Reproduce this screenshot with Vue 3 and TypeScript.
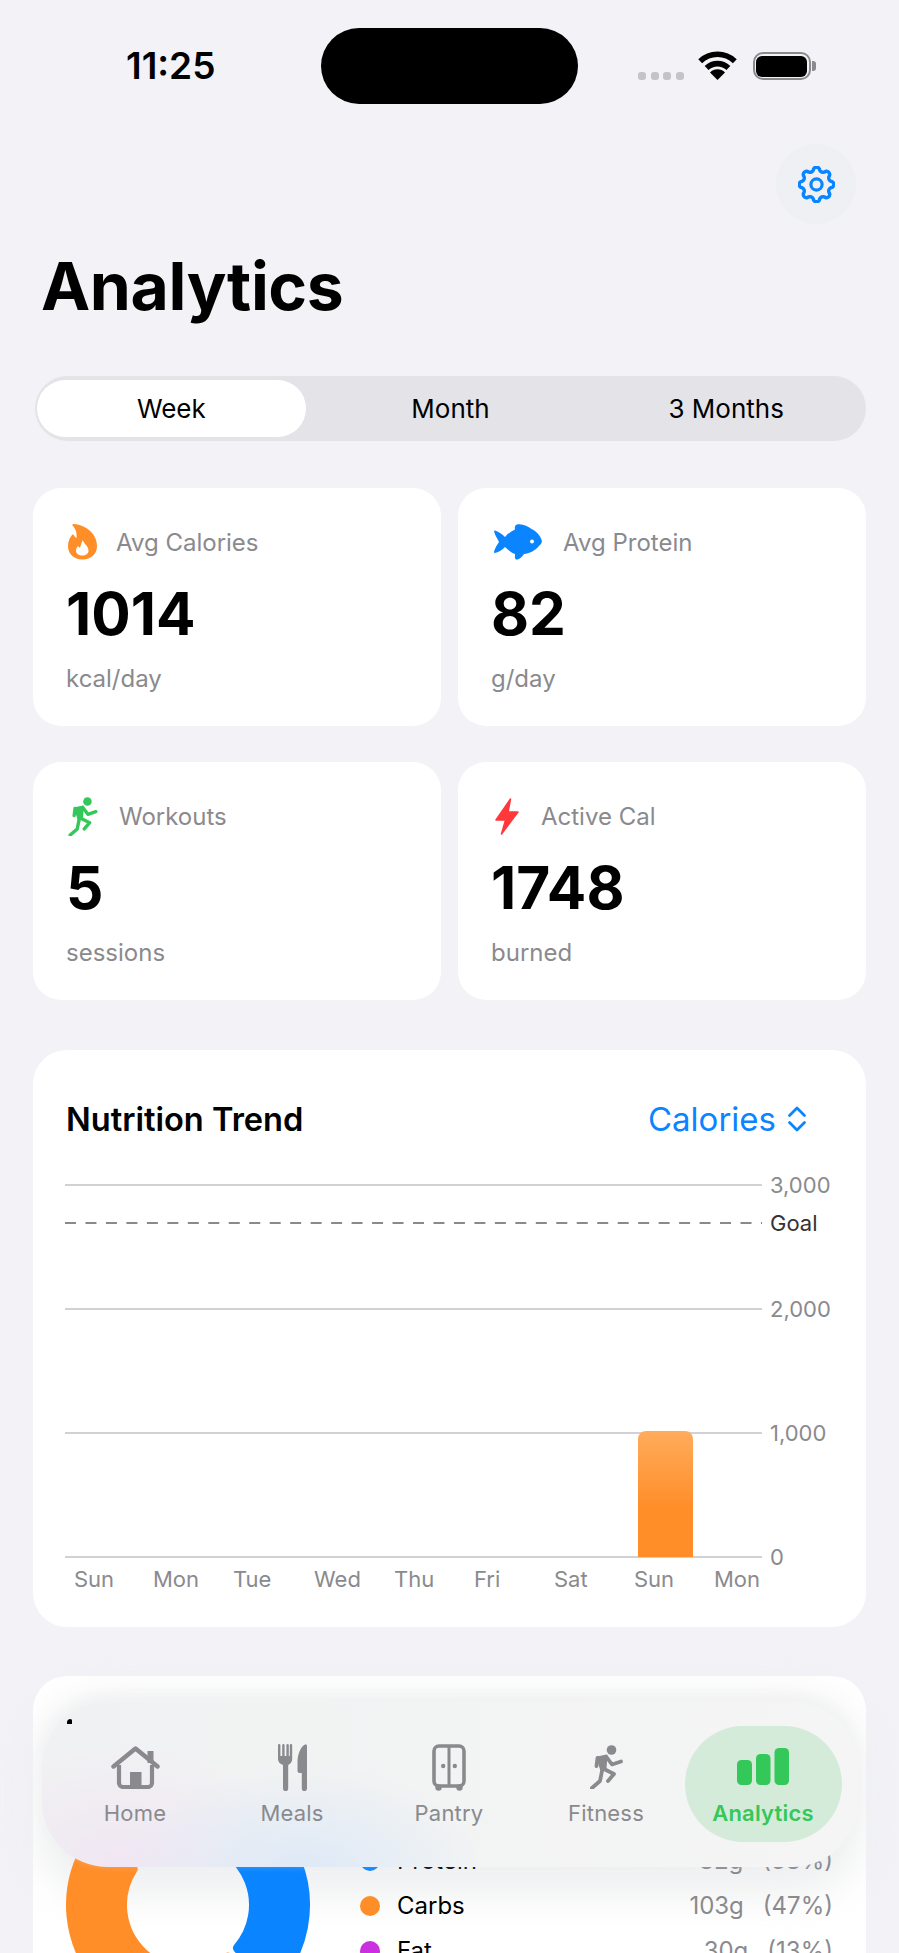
<script setup lang="ts">
const runnerTorso = 'M7.5 12.5 L16.5 10.5 L15.5 23.5 L11.5 26 Z'
const gearPath = (() => {
  const pts: string[] = []
  const n = 240
  for (let i = 0; i < n; i++) {
    const t = (i / n) * Math.PI * 2
    const c = Math.cos(8 * t)
    const s = Math.sign(c) * Math.pow(Math.abs(c), 0.6)
    const r = 15.4 + 1.9 * s
    pts.push(`${(18.5 + r * Math.sin(t)).toFixed(2)} ${(18.5 - r * Math.cos(t)).toFixed(2)}`)
  }
  return 'M' + pts.join(' L') + ' Z'
})()

const stats = [
  { id: 'flame', label: 'Avg Calories', value: '1014', unit: 'kcal/day' },
  { id: 'fish', label: 'Avg Protein', value: '82', unit: 'g/day' },
  { id: 'run', label: 'Workouts', value: '5', unit: 'sessions' },
  { id: 'bolt', label: 'Active Cal', value: '1748', unit: 'burned' },
]

const gridLines = [
  { y: 15, label: '3,000' },
  { y: 139, label: '2,000' },
  { y: 263, label: '1,000' },
  { y: 387, label: '0' },
]
const days = [
  ['Sun', 9], ['Mon', 88], ['Tue', 168], ['Wed', 249], ['Thu', 329],
  ['Fri', 409], ['Sat', 489], ['Sun', 569], ['Mon', 649],
] as [string, number][]

function sector(startDeg: number, endDeg: number): string {
  const cx = 122, cy = 122, R = 117, r = 66
  const a = (startDeg * Math.PI) / 180, b = (endDeg * Math.PI) / 180
  const dO = 6.5 / 122, dI = 6.5 / 61
  const p = (rad: number, ang: number) =>
    `${(cx + rad * Math.sin(ang)).toFixed(2)} ${(cy - rad * Math.cos(ang)).toFixed(2)}`
  const large = endDeg - startDeg > 180 ? 1 : 0
  return `M${p(R, a + dO)} A${R} ${R} 0 ${large} 1 ${p(R, b - dO)} L${p(r, b - dI)} A${r} ${r} 0 ${large} 0 ${p(r, a + dI)} Z`
}

const slices = [
  { color: '#0a84ff', d: sector(0, 136.8) },
  { color: '#ff8d28', d: sector(136.8, 309) },
  { color: '#cb30e0', d: sector(309, 360) },
]
const legend = [
  { name: 'Protein', color: '#0a84ff', g: '82g', pct: '(38%)' },
  { name: 'Carbs', color: '#ff8d28', g: '103g', pct: '(47%)' },
  { name: 'Fat', color: '#cb30e0', g: '30g', pct: '(13%)' },
]
const tabs = ['Home', 'Meals', 'Pantry', 'Fitness', 'Analytics']
</script>

<template>
  <div class="screen">
    <header class="status">
      <div class="time">11:25</div>
      <div class="island"></div>
      <div class="status-right">
        <div class="signal"><i></i><i></i><i></i><i></i></div>
        <svg class="wifi" viewBox="0 0 39 29" width="39" height="29">
          <path d="M2.2 10.2 A25 25 0 0 1 36.8 10.2" fill="none" stroke="#000" stroke-width="5.6" />
          <path d="M8.6 17 A15.8 15.8 0 0 1 30.4 17" fill="none" stroke="#000" stroke-width="5.6" />
          <path d="M19.5 29 L12 21.4 A10.5 10.5 0 0 1 27 21.4 Z" fill="#000" />
        </svg>
        <div class="battery"><div class="battery-fill"></div></div>
        <div class="battery-nub"></div>
      </div>
    </header>

    <div class="toolbar">
      <button class="gear-btn" aria-label="Settings">
        <svg viewBox="0 0 37 37" width="37" height="37">
          <path :d="gearPath" fill="none" stroke="#0a84ff" stroke-width="3.4" stroke-linejoin="round" />
          <circle cx="18.5" cy="18.5" r="5.6" fill="none" stroke="#0a84ff" stroke-width="3.2" />
        </svg>
      </button>
    </div>

    <h1 class="title">Analytics</h1>

    <div class="segmented">
      <div class="seg seg-on">Week</div>
      <div class="seg">Month</div>
      <div class="seg">3 Months</div>
    </div>

    <section class="stats">
      <article v-for="s in stats" :key="s.id" class="card stat">
        <div class="stat-head" :class="'head-' + s.id">
          <svg v-if="s.id === 'flame'" viewBox="0 0 29 36" width="29" height="36">
            <path fill="#ff8d28" d="M4.5 1.5 C4 0.6 5 0 6 0.1 C15 0.6 29 8 29 22 C29 30 23 35.5 14.5 35.5 C6 35.5 0 30 0 22 C0 17 2 13.5 4 11 C4.6 10.2 5.6 10.4 6 11.3 C6.6 12.6 7.4 13.6 8.5 14 C9 9 8 5 4.5 1.5Z" />
            <path fill="#fff" d="M14.8 16 C15.5 19.5 20.5 22 20.5 26.5 C20.5 29.8 17.8 31.5 14.3 31.5 C10.8 31.5 8 29.8 8 26.5 C8 24.5 9 23 10 22 C10.6 23 11.2 23.6 12 23.8 C12.8 21.5 13.5 18.5 14.8 16Z" />
          </svg>
          <svg v-else-if="s.id === 'fish'" viewBox="0 0 48 36" width="48" height="36">
            <path fill="#0a84ff" d="M1 6.5 C4 7.5 8 10 11 13 C14 9.5 17.5 7 21 5.5 C20.5 3 21 1 23 0.5 C28 -0.5 34 2 37.5 5 C43 7.5 47 12.5 47.8 17 C48 18.5 47 20 45 22 C41 27 35 29.5 30 30 C28 33 25 36 22 35.5 C20.5 35 21 33 21 30 C17 28.5 14 26 11 23 C8 26 4 28.5 1 29 C0 29 0 28 0.2 27 C1 24 3.5 20.5 5 18 C3.5 15 1 11 0.2 8 C0 7 0.3 6.3 1 6.5Z" />
            <circle cx="38" cy="17.5" r="2" fill="#fff" />
          </svg>
          <svg v-else-if="s.id === 'run'" viewBox="0 0 33 44" width="30" height="39">
            <circle cx="21.5" cy="5" r="4.8" fill="#34c759" />
            <path :d="runnerTorso" fill="#34c759" stroke="#34c759" stroke-width="2" stroke-linejoin="round" />
            <path d="M7.5 13 L6.5 21 M16.5 12 L22 19.5 L31 16.5 M14 24 L24 29 L18 36 M12 26 L10 36 L2 43" fill="none" stroke="#34c759" stroke-width="3.8" stroke-linecap="round" stroke-linejoin="round" />
          </svg>
          <svg v-else viewBox="0 0 24 37" width="24" height="37">
            <path fill="#ff383c" stroke="#ff383c" stroke-width="1.5" stroke-linejoin="round" d="M15.5 1 L1 22 H10.5 L6.5 36 L23 14 H13 Z" />
          </svg>
          <span class="stat-label">{{ s.label }}</span>
        </div>
        <div class="stat-value">{{ s.value }}</div>
        <div class="stat-unit">{{ s.unit }}</div>
      </article>
    </section>

    <section class="card chart-card">
      <div class="chart-head">
        <h2 class="chart-title">Nutrition Trend</h2>
        <div class="picker">
          <span>Calories</span>
          <svg viewBox="0 0 20 26" width="20" height="26">
            <path d="M2.5 9.5 L10 2 L17.5 9.5 M2.5 16.5 L10 24 L17.5 16.5" fill="none" stroke="#0a84ff" stroke-width="2.8" stroke-linecap="round" stroke-linejoin="round" />
          </svg>
        </div>
      </div>
      <svg class="chart" viewBox="0 0 790 430" width="790" height="430">
        <defs>
          <linearGradient id="barGrad" x1="0" y1="0" x2="0" y2="1">
            <stop offset="0" stop-color="#ffac5c" />
            <stop offset="0.62" stop-color="#ff8d28" />
          </linearGradient>
        </defs>
        <g v-for="g in gridLines" :key="g.label">
          <line x1="0" x2="697" :y1="g.y" :y2="g.y" stroke="#d1d1d6" stroke-width="2" />
          <text x="705" :y="g.y + 8" class="tick">{{ g.label }}</text>
        </g>
        <line x1="0" x2="697" y1="53" y2="53" stroke="#8a8a8e" stroke-width="2" stroke-dasharray="11 9.47" />
        <text x="705" y="61" class="goal">Goal</text>
        <path d="M573 387 V269 a8 8 0 0 1 8 -8 H620 a8 8 0 0 1 8 8 V387 Z" fill="url(#barGrad)" />
        <text v-for="(d, i) in days" :key="i" :x="d[1]" y="417" class="tick">{{ d[0] }}</text>
      </svg>
    </section>

    <section class="card macro-card">
      <div class="halo"></div>
      <div class="macro-row">
        <svg class="donut" viewBox="0 0 244 244" width="244" height="244">
          <path v-for="s in slices" :key="s.color" :d="s.d" :fill="s.color" :stroke="s.color" stroke-width="10" stroke-linejoin="round" />
        </svg>
        <ul class="legend">
          <li v-for="l in legend" :key="l.name" class="legend-row">
            <span class="dot" :style="{ background: l.color }"></span>
            <span class="legend-name">{{ l.name }}</span>
            <span class="legend-g">{{ l.g }}</span>
            <span class="legend-pct">{{ l.pct }}</span>
          </li>
        </ul>
      </div>
    </section>

    <nav class="tabbar">
      <i class="peek"></i>
      <div v-for="t in tabs" :key="t" class="tab" :class="{ 'tab-on': t === 'Analytics' }">
        <div class="tab-icon">
          <svg v-if="t === 'Home'" viewBox="0 0 49 43" width="49" height="43">
            <rect x="36.5" y="5" width="6" height="12" fill="#8a8a8e" />
            <path d="M2.5 20.5 L24.5 2.5 L46.5 20.5" fill="none" stroke="#8a8a8e" stroke-width="4.4" stroke-linecap="round" stroke-linejoin="round" />
            <path d="M8 19 V37 a4 4 0 0 0 4 4 H37 a4 4 0 0 0 4 -4 V19" fill="none" stroke="#8a8a8e" stroke-width="4.2" />
            <rect x="19" y="26" width="11.5" height="14" fill="#8a8a8e" />
          </svg>
          <svg v-else-if="t === 'Meals'" viewBox="0 0 29 47" width="29" height="47">
            <path fill="#8a8a8e" d="M0 1.2 a1.2 1.2 0 0 1 2.4 0 V12 H4.2 V1.2 a1.2 1.2 0 0 1 2.4 0 V12 H8.4 V1.2 a1.2 1.2 0 0 1 2.4 0 V12 H11.8 V1.2 a1.2 1.2 0 0 1 2.4 0 V15 C14.2 18 12.4 20 10.2 21 V44.5 a2.6 2.6 0 0 1 -5.2 0 V21 C2 20 0 18 0 15 Z" />
            <path fill="#8a8a8e" d="M27.5 0.3 a1.5 1.5 0 0 1 1.5 1.5 V44.5 a2.6 2.6 0 0 1 -5.2 0 V29 H21.5 a2 2 0 0 1 -2 -2 V18 C19.5 10 23 2 27.5 0.3 Z" />
          </svg>
          <svg v-else-if="t === 'Pantry'" viewBox="0 0 34 47" width="34" height="47">
            <rect x="2" y="2" width="30" height="40" rx="5" fill="none" stroke="#8a8a8e" stroke-width="3.6" />
            <path d="M17 2 V42" stroke="#8a8a8e" stroke-width="3" />
            <circle cx="11.2" cy="22" r="2.2" fill="#8a8a8e" />
            <circle cx="22.8" cy="22" r="2.2" fill="#8a8a8e" />
            <circle cx="6.5" cy="43.5" r="3.2" fill="#8a8a8e" />
            <circle cx="27.5" cy="43.5" r="3.2" fill="#8a8a8e" />
          </svg>
          <svg v-else-if="t === 'Fitness'" viewBox="0 0 33 44" width="33" height="44">
            <circle cx="21.5" cy="5" r="4.8" fill="#8a8a8e" />
            <path :d="runnerTorso" fill="#8a8a8e" stroke="#8a8a8e" stroke-width="2" stroke-linejoin="round" />
            <path d="M7.5 13 L6.5 21 M16.5 12 L22 19.5 L31 16.5 M14 24 L24 29 L18 36 M12 26 L10 36 L2 43" fill="none" stroke="#8a8a8e" stroke-width="3.8" stroke-linecap="round" stroke-linejoin="round" />
          </svg>
          <svg v-else viewBox="0 0 52 38" width="52" height="38">
            <rect x="0" y="12" width="15" height="25" rx="4.5" fill="#34c759" />
            <rect x="19" y="6" width="14.5" height="31" rx="4.5" fill="#34c759" />
            <rect x="37.5" y="0" width="14.5" height="37" rx="4.5" fill="#34c759" />
          </svg>
        </div>
        <span class="tab-label">{{ t }}</span>
      </div>
    </nav>
  </div>
</template>

<style scoped>
.screen {
  position: relative;
  width: 899px;
  height: 1953px;
  overflow: hidden;
  background: #f2f2f7;
  font-family: Inter, "Liberation Sans", sans-serif;
  color: #000;
}
.status {
  display: grid;
  grid-template-columns: 321px 257px 1fr;
  height: 75px;
  padding-top: 28px;
  box-sizing: content-box;
}
.time {
  padding-left: 126px;
  font-size: 37px;
  font-weight: 600;
  line-height: 76px;
}
.island { background: #000; border-radius: 38px; height: 76px; }
.status-right { display: flex; align-items: flex-start; padding-left: 60px; position: relative; }
.signal { display: flex; gap: 4.5px; margin-top: 44px; }
.signal i { display: block; width: 8px; height: 8px; border-radius: 3px; background: #c4c4c8; }
.wifi { margin-left: 14px; margin-top: 23px; }
.battery {
  margin-left: 16px;
  margin-top: 24px;
  width: 58px;
  height: 28px;
  box-sizing: border-box;
  border: 2.5px solid #8a8a8e;
  border-radius: 10px;
  padding: 1.5px;
}
.battery-fill { width: 100%; height: 100%; background: #000; border-radius: 6px; }
.battery-nub { width: 4px; height: 10px; margin-top: 33px; margin-left: 1px; background: #8a8a8e; border-radius: 0 3px 3px 0; }
.toolbar { display: flex; justify-content: flex-end; padding: 41px 43px 0 0; }
.gear-btn {
  width: 80px;
  height: 80px;
  border: 0;
  border-radius: 50%;
  background: #eff0f3;
  display: flex;
  align-items: center;
  justify-content: center;
  padding: 0;
}
.title {
  margin: 26px 0 0 41px;
  font-size: 66px;
  line-height: 72px;
  font-weight: 700;
  letter-spacing: -0.4px;
}
.segmented {
  margin: 54px 33px 0 35px;
  height: 65px;
  box-sizing: border-box;
  padding: 4px 2px;
  display: grid;
  grid-template-columns: repeat(3, 1fr);
  background: #e3e3e8;
  border-radius: 33px;
}
.seg {
  display: flex;
  align-items: center;
  justify-content: center;
  font-size: 26px;
  font-weight: 400;
  border-radius: 29px;
}
.seg-on { background: #fff; margin-right: 7px; }
.card { background: #fff; }
.stats {
  margin: 47px 33px 0;
  display: grid;
  grid-template-columns: 408px 408px;
  grid-auto-rows: 238px;
  column-gap: 17px;
  row-gap: 36px;
}
.stat { border-radius: 28px; padding: 35px 33px 0; box-sizing: border-box; }
.stat-head { display: flex; align-items: center; height: 38px; }
.stat-head svg { flex: none; }
.head-flame svg { margin: 0 19px 0 2px; }
.head-fish svg { margin: 0 21px 0 3px; }
.head-run svg { margin: 0 21px 0 2px; }
.head-bolt svg { margin: 0 22px 0 4px; }
.stat-label { font-size: 24px; color: #8a8a8e; }
.stat-value { margin-top: 19.5px; font-size: 58.5px; line-height: 66px; font-weight: 700; }
.stat-unit { margin-top: 17.5px; font-size: 24px; line-height: 30px; color: #8a8a8e; }
.chart-card {
  margin: 50px 33px 0;
  height: 577px;
  border-radius: 34px;
  padding: 0 33px;
  box-sizing: border-box;
}
.chart-head { display: flex; justify-content: space-between; align-items: center; height: 120px; padding: 18px 26px 0 0; box-sizing: border-box; }
.chart-title { margin: 0; font-size: 32.6px; font-weight: 600; }
.picker { display: flex; align-items: center; gap: 11px; font-size: 33px; color: #0a84ff; }
.chart { display: block; margin-left: -1px; }
.tick { font-family: Inter, "Liberation Sans", sans-serif; font-size: 22px; fill: #8a8a8e; }
.goal { font-family: Inter, "Liberation Sans", sans-serif; font-size: 22px; fill: #333; }
.macro-card {
  position: relative;
  margin: 49px 33px 0;
  height: 400px;
  border-radius: 34px;
  padding: 107px 33px 0 33px;
  box-sizing: border-box;
}
.halo {
  position: absolute;
  left: 2px;
  right: 2px;
  top: 20px;
  height: 200px;
  border-radius: 70px;
  background: #eff0f1;
  filter: blur(18px);
}
.macro-row { position: relative; display: flex; align-items: center; gap: 50px; }
.donut { flex: none; overflow: visible; }
.legend { flex: 1; list-style: none; margin: 2px 0 0; padding: 0; display: flex; flex-direction: column; gap: 15px; }
.legend-row { display: flex; align-items: center; font-size: 24px; line-height: 30px; }
.dot { width: 20px; height: 20px; border-radius: 50%; margin-right: 17px; }
.legend-name { flex: 1; }
.legend-g, .legend-pct { color: #8a8a8e; }
.legend-pct { margin-left: 19px; }
.tabbar {
  position: absolute;
  left: 42px;
  top: 1702px;
  width: 816px;
  height: 165px;
  box-sizing: border-box;
  padding: 24px 0 0 14.5px;
  display: flex;
  align-items: flex-start;
  border-radius: 66px;
  box-shadow: 0 -6px 12px rgba(240, 241, 243, 0.8);
  background:
    radial-gradient(ellipse 180px 110px at 260px 172px, #dde9f7 0%, rgba(221, 233, 247, 0) 100%),
    radial-gradient(ellipse 170px 120px at 80px 165px, #f0e6f3 0%, rgba(240, 230, 243, 0) 100%),
    linear-gradient(90deg, #f0f1f2 0%, #f2f3f3 45%, #f5f5f5 100%);
}
.peek {
  position: absolute;
  left: 25px;
  top: 17px;
  width: 5px;
  height: 5px;
  background: #000;
  border-radius: 70% 30% 10% 10%;
}
.tab {
  width: 157px;
  height: 116px;
  box-sizing: border-box;
  padding-top: 17px;
  display: flex;
  flex-direction: column;
  align-items: center;
  border-radius: 58px;
  color: #8a8a8e;
}
.tab-on { background: #d4ebd9; color: #34c759; }
.tab-icon { height: 48px; display: flex; align-items: center; justify-content: center; }
.tab-label { margin-top: 9px; font-size: 22px; line-height: 26px; letter-spacing: 0.2px; }
.tab-on .tab-label { font-weight: 600; }
</style>
